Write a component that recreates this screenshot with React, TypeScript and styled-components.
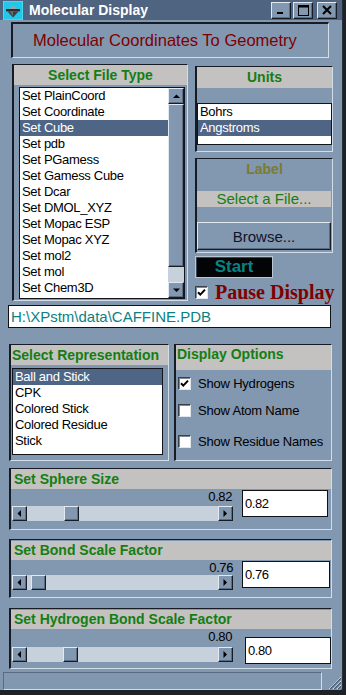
import React from "react";
import styled, { createGlobalStyle, css } from "styled-components";

const C = {
  bg: "#8297b0",
  title: "#4e6481",
  sel: "#4f6586",
  gray: "#c4c2c0",
  green: "#137e13",
  dark: "#161b24",
  light: "#d3dde8",
  track: "#c7d1db",
  red: "#7e0000",
  teal: "#0b8282",
};

const Global = createGlobalStyle`
  html, body { margin: 0; padding: 0; background: #1e2226; }
  body {
    width: 346px; height: 695px; overflow: hidden;
    font-family: "Liberation Sans", Arial, sans-serif;
  }
  * { box-sizing: border-box; }
`;

const raised = css`
  border-top: 1px solid #e2e9f1;
  border-left: 1px solid #e2e9f1;
  border-right: 1px solid ${C.dark};
  border-bottom: 1px solid ${C.dark};
  box-shadow: inset -1px -1px 0 #5b6c83;
`;

const sunken = css`
  border-top: 1px solid ${C.dark};
  border-left: 2px solid ${C.dark};
  border-right: 1px solid ${C.light};
  border-bottom: 1px solid ${C.light};
`;

const Window = styled.div`
  width: 343px;
  height: 690px;
  background: ${C.bg};
  border-right: 1px solid #2a3038;
  display: flex;
  flex-direction: column;
`;

const TitleBar = styled.div`
  height: 20px;
  background: ${C.title};
  display: flex;
  align-items: center;
  padding: 0 5px 0 3px;
`;

const TitleText = styled.span`
  flex: 1;
  margin-left: 6px;
  color: #fff;
  font-weight: bold;
  font-size: 14px;
`;

const CapButtons = styled.div`
  display: flex;
  gap: 2px;
`;

const CapButton = styled.div<{ $gap?: number }>`
  width: 20px;
  height: 17px;
  margin-left: ${(p) => p.$gap ?? 0}px;
  background: ${C.bg};
  ${raised};
  display: flex;
  align-items: center;
  justify-content: center;
`;

const Banner = styled.div`
  margin: 2px 0 0 11px;
  width: 318px;
  height: 36px;
  border-top: 2px solid ${C.dark};
  border-left: 2px solid ${C.dark};
  border-right: 1px solid ${C.light};
  border-bottom: 1px solid ${C.light};
  color: ${C.red};
  font-size: 16.5px;
  padding-left: 20px;
  display: flex;
  align-items: center;
`;

const TopRow = styled.div`
  display: flex;
  align-items: flex-start;
  margin-top: 6px;
  height: 237px;
`;

const Frame = styled.div<{ $w: number; $h: number; $ml?: number; $mt?: number }>`
  width: ${(p) => p.$w}px;
  height: ${(p) => p.$h}px;
  margin-left: ${(p) => p.$ml ?? 0}px;
  margin-top: ${(p) => p.$mt ?? 0}px;
  ${sunken};
  display: flex;
  flex-direction: column;
  flex-shrink: 0;
`;

const SectionHeader = styled.div<{ $h?: number; $center?: boolean; $pl?: number; $lh?: number; $mt?: number }>`
  height: ${(p) => p.$h ?? 20}px;
  line-height: ${(p) => p.$lh ?? p.$h ?? 20}px;
  margin-top: ${(p) => p.$mt ?? 0}px;
  background: ${C.gray};
  color: ${C.green};
  font-weight: bold;
  font-size: 14px;
  text-align: ${(p) => (p.$center ? "center" : "left")};
  padding-left: ${(p) => p.$pl ?? 0}px;
  white-space: nowrap;
  flex-shrink: 0;
`;

const ListBox = styled.div<{ $w?: number; $h: number; $mt: number; $ml: number }>`
  width: ${(p) => (p.$w ? `${p.$w}px` : "auto")};
  height: ${(p) => p.$h}px;
  margin-top: ${(p) => p.$mt}px;
  margin-left: ${(p) => p.$ml}px;
  background: #fff;
  border: 1px solid #11151b;
  display: flex;
  overflow: hidden;
  flex-shrink: 0;
`;

const Items = styled.div`
  flex: 1;
  display: flex;
  flex-direction: column;
`;

const Item = styled.div<{ $sel?: boolean }>`
  height: 16px;
  line-height: 16px;
  padding-left: 2px;
  font-size: 13px;
  letter-spacing: -0.3px;
  white-space: nowrap;
  color: ${(p) => (p.$sel ? "#fff" : "#000")};
  background: ${(p) => (p.$sel ? C.sel : "transparent")};
`;

const VScroll = styled.div`
  width: 16px;
  display: flex;
  flex-direction: column;
  background: ${C.track};
`;

const ScrollBtn = styled.div<{ $w?: number; $h?: number }>`
  width: ${(p) => p.$w ?? 16}px;
  height: ${(p) => p.$h ?? 16}px;
  background: ${C.bg};
  ${raised};
  display: flex;
  align-items: center;
  justify-content: center;
  flex-shrink: 0;
`;

const VThumb = styled.div`
  flex: 1;
  background: ${C.bg};
  ${raised};
`;

const VTrackGap = styled.div`
  height: 15px;
`;

const RightCol = styled.div`
  margin-left: 7px;
  width: 138px;
  display: flex;
  flex-direction: column;
`;

const LabelCaption = styled.div`
  margin-top: 1px;
  height: 19px;
  line-height: 19px;
  text-align: center;
  color: #7c7c2c;
  font-weight: bold;
  font-size: 14px;
`;

const FileBar = styled.div`
  margin: 12px 1px 0 0;
  height: 16px;
  line-height: 16px;
  background: ${C.gray};
  color: ${C.green};
  font-size: 15px;
  text-align: center;
`;

const BrowseButton = styled.div`
  margin: 15px 1px 0 0;
  height: 28px;
  background: ${C.bg};
  ${raised};
  color: #10132a;
  font-size: 15px;
  display: flex;
  align-items: center;
  justify-content: center;
`;

const StartButton = styled.div`
  margin-top: 3px;
  width: 78px;
  height: 22px;
  background: #020406;
  border: 1px solid #b9c6d4;
  box-shadow: inset 1px 1px 0 #3b4654;
  color: ${C.teal};
  font-weight: bold;
  font-size: 17px;
  display: flex;
  align-items: center;
  justify-content: center;
`;

const PauseRow = styled.label`
  margin-top: 8px;
  display: flex;
  align-items: center;
  gap: 7px;
  height: 13px;
`;

const PauseText = styled.span`
  font-family: "Liberation Serif", "Times New Roman", serif;
  font-weight: bold;
  font-size: 20px;
  color: ${C.red};
  white-space: nowrap;
  line-height: 13px;
`;

const CheckBox = styled.div`
  width: 13px;
  height: 13px;
  flex-shrink: 0;
  background: #fff;
  border-top: 1px solid #3a3f48;
  border-left: 1px solid #3a3f48;
  border-right: 1px solid #dfe6ee;
  border-bottom: 1px solid #dfe6ee;
  box-shadow: inset 1px 1px 0 #7e8996;
  display: flex;
  align-items: center;
  justify-content: center;
`;

const PathField = styled.div`
  margin: 4px 0 0 8px;
  width: 323px;
  height: 23px;
  background: #fff;
  border: 1px solid #0e1116;
  color: ${C.teal};
  font-size: 15px;
  padding-left: 2px;
  display: flex;
  align-items: center;
`;

const MidRow = styled.div`
  display: flex;
  margin-top: 16px;
`;

const OptionRow = styled.div<{ $mt: number }>`
  display: flex;
  align-items: center;
  gap: 7px;
  margin: ${(p) => p.$mt}px 0 0 2px;
  height: 13px;
  font-size: 13px;
  letter-spacing: -0.2px;
  color: #000;
  white-space: nowrap;
`;

const SliderBody = styled.div`
  display: flex;
  align-items: flex-start;
`;

const SliderCol = styled.div`
  margin-left: 1px;
  width: 221px;
  display: flex;
  flex-direction: column;
`;

const ValueLabel = styled.div<{ $h: number; $pr: number }>`
  height: ${(p) => p.$h}px;
  line-height: 16px;
  text-align: right;
  padding-right: ${(p) => p.$pr}px;
  font-size: 13px;
  letter-spacing: -0.4px;
  color: #000;
`;

const HScroll = styled.div`
  height: 15px;
  display: flex;
  background: ${C.track};
`;

const HGap = styled.div<{ $w: number }>`
  width: ${(p) => p.$w}px;
  flex-shrink: 0;
`;

const HThumb = styled.div`
  width: 15px;
  height: 15px;
  background: ${C.bg};
  ${raised};
  flex-shrink: 0;
`;

const Spring = styled.div`
  flex: 1;
`;

const ValueBox = styled.div<{ $ml: number; $mt: number; $w: number }>`
  margin-left: ${(p) => p.$ml}px;
  margin-top: ${(p) => p.$mt}px;
  width: ${(p) => p.$w}px;
  height: 27px;
  background: #fff;
  border: 1px solid #0e1116;
  font-size: 13px;
  letter-spacing: -0.4px;
  padding: 5px 0 0 2px;
  color: #000;
`;

const BottomRow = styled.div`
  display: flex;
  align-items: flex-end;
  margin-top: 3px;
`;

const StatusBar = styled.div`
  margin-left: 3px;
  width: 319px;
  height: 18px;
  border-top: 1px solid #5a6a80;
  border-left: 1px solid #5a6a80;
  border-right: 1px solid ${C.light};
  border-bottom: 1px solid ${C.light};
`;

const GripBox = styled.div`
  margin-left: 3px;
  width: 17px;
  height: 17px;
`;

const Desktop = styled.div`
  height: 5px;
  background: #1e2226;
`;

const Check = () => (
  <svg width="9" height="9" viewBox="0 0 9 9">
    <path d="M1 4.2 L3.3 6.6 L8 1.6" stroke="#000" strokeWidth="2" fill="none" />
  </svg>
);

const Tri = ({ dir }: { dir: "up" | "down" | "left" | "right" }) => {
  const pts = {
    up: "0,4 7,4 3.5,0.5",
    down: "0,0.5 7,0.5 3.5,4",
    left: "4,0 4,7 0.5,3.5",
    right: "0.5,0 0.5,7 4,3.5",
  }[dir];
  const vert = dir === "up" || dir === "down";
  return (
    <svg width={vert ? 7 : 5} height={vert ? 5 : 7} viewBox={vert ? "0 0 7 5" : "0 0 5 7"}>
      <polygon points={pts} fill="#000" />
    </svg>
  );
};

const AppIcon = () => (
  <svg width="20" height="19" viewBox="0 0 20 19">
    <rect x="0" y="0" width="20" height="19" fill="#22c8ea" />
    <rect x="0" y="0" width="20" height="19" fill="none" stroke="#6ee4f8" strokeWidth="1" />
    <path d="M6 8 Q10 2 14 8 Z" fill="#9aa2a8" />
    <rect x="3" y="8" width="14" height="2.4" fill="#2a2e33" />
    <path d="M4.5 10.4 L15.5 10.4 L10 16.5 Z" fill="#3a3f44" />
    <path d="M7 10.4 L10 10.4 L10 15.5 Z" fill="#6a7076" />
  </svg>
);

const Grip = () => (
  <svg width="17" height="17" viewBox="0 0 17 17">
    {[0, 4, 8, 12].map((o) => (
      <g key={o}>
        <line x1={16 - o} y1="16" x2="16" y2={16 - o} stroke="#dfe7ef" strokeWidth="1" />
        <line x1={16 - o + 1.2} y1="16" x2="16" y2={16 - o + 1.2} stroke="#4a586b" strokeWidth="1.2" />
      </g>
    ))}
  </svg>
);

const fileTypes = [
  "Set PlainCoord",
  "Set Coordinate",
  "Set Cube",
  "Set pdb",
  "Set PGamess",
  "Set Gamess Cube",
  "Set Dcar",
  "Set DMOL_XYZ",
  "Set Mopac ESP",
  "Set Mopac XYZ",
  "Set mol2",
  "Set mol",
  "Set Chem3D",
];

const reps = ["Ball and Stick", "CPK", "Colored Stick", "Colored Residue", "Stick"];

type SliderProps = {
  title: string;
  value: string;
  mt: number;
  h: number;
  headerH: number;
  headerMt: number;
  labelH: number;
  labelPr: number;
  thumbGap: number;
  boxMl: number;
  boxMt: number;
  boxW: number;
};

const SliderPanel = (p: SliderProps) => (
  <Frame $w={323} $h={p.h} $ml={9} $mt={p.mt}>
    <SectionHeader $h={p.headerH} $pl={3} $mt={p.headerMt}>
      {p.title}
    </SectionHeader>
    <SliderBody>
      <SliderCol>
        <ValueLabel $h={p.labelH} $pr={p.labelPr}>
          {p.value}
        </ValueLabel>
        <HScroll>
          <ScrollBtn $w={15} $h={15}>
            <Tri dir="left" />
          </ScrollBtn>
          <HGap $w={p.thumbGap} />
          <HThumb />
          <Spring />
          <ScrollBtn $w={15} $h={15}>
            <Tri dir="right" />
          </ScrollBtn>
        </HScroll>
      </SliderCol>
      <ValueBox $ml={p.boxMl} $mt={p.boxMt} $w={p.boxW}>
        {p.value}
      </ValueBox>
    </SliderBody>
  </Frame>
);

export default function App() {
  return (
    <>
      <Global />
      <Window>
        <TitleBar>
          <AppIcon />
          <TitleText>Molecular Display</TitleText>
          <CapButtons>
            <CapButton>
              <svg width="10" height="10" viewBox="0 0 10 10">
                <rect x="1" y="7" width="6" height="2" fill="#000" />
              </svg>
            </CapButton>
            <CapButton>
              <svg width="11" height="11" viewBox="0 0 11 11">
                <rect x="0.5" y="0.5" width="10" height="10" fill="none" stroke="#000" />
                <rect x="0.5" y="0.5" width="10" height="2" fill="#000" />
              </svg>
            </CapButton>
            <CapButton $gap={2}>
              <svg width="10" height="10" viewBox="0 0 10 10">
                <path d="M1 1 L9 9 M9 1 L1 9" stroke="#000" strokeWidth="2" />
              </svg>
            </CapButton>
          </CapButtons>
        </TitleBar>

        <Banner>Molecular Coordinates To Geometry</Banner>

        <TopRow>
          <Frame $w={176} $h={237} $ml={12}>
            <SectionHeader $center>Select File Type</SectionHeader>
            <ListBox $w={166} $h={212} $mt={2} $ml={5}>
              <Items>
                {fileTypes.map((t) => (
                  <Item key={t} $sel={t === "Set Cube"}>
                    {t}
                  </Item>
                ))}
              </Items>
              <VScroll>
                <ScrollBtn>
                  <Tri dir="up" />
                </ScrollBtn>
                <VThumb />
                <VTrackGap />
                <ScrollBtn>
                  <Tri dir="down" />
                </ScrollBtn>
              </VScroll>
            </ListBox>
          </Frame>

          <RightCol>
            <Frame $w={138} $h={86} $mt={2}>
              <SectionHeader $center $h={21}>
                Units
              </SectionHeader>
              <ListBox $h={42} $mt={15} $ml={0}>
                <Items>
                  <Item>Bohrs</Item>
                  <Item $sel>Angstroms</Item>
                </Items>
              </ListBox>
            </Frame>
            <Frame $w={138} $h={95} $mt={6}>
              <LabelCaption>Label</LabelCaption>
              <FileBar>Select a File...</FileBar>
              <BrowseButton>Browse...</BrowseButton>
            </Frame>
            <StartButton>Start</StartButton>
            <PauseRow>
              <CheckBox>
                <Check />
              </CheckBox>
              <PauseText>Pause Display</PauseText>
            </PauseRow>
          </RightCol>
        </TopRow>

        <PathField>H:\XPstm\data\CAFFINE.PDB</PathField>

        <MidRow>
          <Frame $w={160} $h={117} $ml={9}>
            <SectionHeader $pl={1}>Select Representation</SectionHeader>
            <ListBox $w={151} $h={87} $mt={3} $ml={1}>
              <Items>
                {reps.map((r, i) => (
                  <Item key={r} $sel={i === 0}>
                    {r}
                  </Item>
                ))}
              </Items>
            </ListBox>
          </Frame>
          <Frame $w={158} $h={117} $ml={5}>
            <SectionHeader $h={25} $lh={18} $pl={1}>
              Display Options
            </SectionHeader>
            <OptionRow $mt={7}>
              <CheckBox>
                <Check />
              </CheckBox>
              Show Hydrogens
            </OptionRow>
            <OptionRow $mt={14}>
              <CheckBox />
              Show Atom Name
            </OptionRow>
            <OptionRow $mt={18}>
              <CheckBox />
              Show Residue Names
            </OptionRow>
          </Frame>
        </MidRow>

        <SliderPanel
          title="Set Sphere Size"
          value="0.82"
          mt={7}
          h={62}
          headerH={20}
          headerMt={0}
          labelH={17}
          labelPr={1}
          thumbGap={37}
          boxMl={9}
          boxMt={1}
          boxW={86}
        />
        <SliderPanel
          title="Set Bond Scale Factor"
          value="0.76"
          mt={9}
          h={59}
          headerH={19}
          headerMt={1}
          labelH={15}
          labelPr={0}
          thumbGap={4}
          boxMl={9}
          boxMt={1}
          boxW={88}
        />
        <SliderPanel
          title="Set Hydrogen Bond Scale Factor"
          value="0.80"
          mt={10}
          h={61}
          headerH={19}
          headerMt={1}
          labelH={18}
          labelPr={1}
          thumbGap={36}
          boxMl={12}
          boxMt={8}
          boxW={86}
        />

        <BottomRow>
          <StatusBar />
          <GripBox>
            <Grip />
          </GripBox>
        </BottomRow>
      </Window>
      <Desktop />
    </>
  );
}
